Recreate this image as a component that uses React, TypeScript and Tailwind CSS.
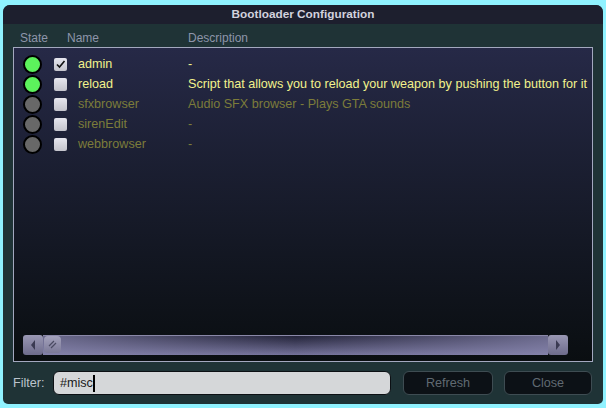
import React from 'react';

const ROWS = [
  { name: 'admin', desc: '-', on: true, checked: true },
  { name: 'reload', desc: 'Script that allows you to reload your weapon by pushing the button for it', on: true, checked: false },
  { name: 'sfxbrowser', desc: 'Audio SFX browser - Plays GTA sounds', on: false, checked: false },
  { name: 'sirenEdit', desc: '-', on: false, checked: false },
  { name: 'webbrowser', desc: '-', on: false, checked: false },
];

const font = { fontFamily: '"Liberation Sans", Arial, sans-serif' };

function Check() {
  return (
    <svg width="11" height="11" viewBox="0 0 11 11">
      <path d="M2 5.5 L4.5 8 L9.5 2" fill="none" stroke="#111" strokeWidth="1.6" />
    </svg>
  );
}

function ScrollBtn({ dir }: { dir: 'left' | 'right' }) {
  return (
    <div className="w-[20px] h-[20px] rounded-[3px] bg-gradient-to-b from-[#9a98b4] to-[#6e6c8c] flex items-center justify-center shrink-0">
      <svg width="8" height="12" viewBox="0 0 8 12">
        {dir === 'left' ? (
          <path d="M6 1 L2 6 L6 11 Z" fill="#3a3a52" />
        ) : (
          <path d="M2 1 L6 6 L2 11 Z" fill="#3a3a52" />
        )}
      </svg>
    </div>
  );
}

export default function App() {
  return (
    <div className="w-[606px] h-[408px] bg-[#90f2ff] pt-[5px] pl-[3px]" style={font}>
      <div className="w-[600px] h-[399px] rounded-t-[7px] rounded-b-[5px] bg-[#1f3336] flex flex-col overflow-hidden">
        {/* Title */}
        <div className="h-[19px] bg-[#1d1f2e] flex items-center justify-center text-[11.8px] font-bold text-[#d2d2de]">
          Bootloader Configuration
        </div>

        {/* Header */}
        <div className="h-[23px] flex items-center text-[12px] text-[#8e95aa] pt-[4px]">
          <span className="ml-[17px] w-[47px]">State</span>
          <span className="w-[121px]">Name</span>
          <span>Description</span>
        </div>

        {/* List */}
        <div className="mx-[10px] h-[315px] border border-[#a3a8bf] bg-gradient-to-b from-[#262947] to-[#0a0e11] flex flex-col">
          <div className="pt-[6px] flex-1">
            {ROWS.map((r) => (
              <div key={r.name} className="h-[20px] flex items-center text-[12.6px]">
                <div
                  className={`ml-[9px] w-[19px] h-[19px] rounded-full border-2 border-black shrink-0 ${
                    r.on ? 'bg-[#5cf25c]' : 'bg-[#686868]'
                  }`}
                />
                <div className="ml-[12px] w-[13px] h-[13px] rounded-[2px] bg-gradient-to-b from-[#e6e6ee] to-[#c4c4cc] flex items-center justify-center shrink-0">
                  {r.checked && <Check />}
                </div>
                <span className={`ml-[11px] w-[110px] shrink-0 ${r.on ? 'text-[#f2f28c]' : 'text-[#7c7c3a]'}`}>{r.name}</span>
                <span className={`whitespace-nowrap ${r.on ? 'text-[#f2f28c]' : 'text-[#7c7c3a]'}`}>{r.desc}</span>
              </div>
            ))}
          </div>

          {/* Horizontal scrollbar */}
          <div className="ml-[9px] mb-[6px] w-[545px] h-[20px] flex items-center">
            <ScrollBtn dir="left" />
            <div className="flex-1 h-[20px] relative bg-gradient-to-b from-[#24243a] to-[#75739a] border-t border-[#8a88a8]">
              <div className="absolute inset-0 bg-gradient-to-r from-[#8a88b0]/70 via-transparent to-[#8a88b0]/70" />
              <div className="absolute left-[1px] top-0 w-[17px] h-[17px] rounded-[4px] bg-gradient-to-b from-[#a4a2bc] to-[#7c7a98] flex items-center justify-center">
                <svg width="9" height="9" viewBox="0 0 9 9">
                  <path d="M1 6 L6 1 M3 8 L8 3" stroke="#4a4a62" strokeWidth="1.2" />
                </svg>
              </div>
            </div>
            <ScrollBtn dir="right" />
          </div>
        </div>

        {/* Bottom row */}
        <div className="flex items-center h-[24px] mt-[9px] px-[10px] text-[12.6px]">
          <span className="w-[40px] text-[#bcc4cc]">Filter:</span>
          <div className="w-[338px] h-[24px] rounded-[6px] border border-[#0c1014] bg-[#d5d7d9] flex items-center pl-[6px] text-[#1a1a1a]">
            #misc<span className="w-[2px] h-[17px] bg-black" />
          </div>
          <button className="ml-[12px] w-[90px] h-[24px] rounded-[6px] border border-[#3e4c52] bg-[#0c1116] text-[#606a72]">
            Refresh
          </button>
          <button className="ml-[11px] w-[88px] h-[24px] rounded-[6px] border border-[#3e4c52] bg-[#0c1116] text-[#606a72]">
            Close
          </button>
        </div>
      </div>
    </div>
  );
}
